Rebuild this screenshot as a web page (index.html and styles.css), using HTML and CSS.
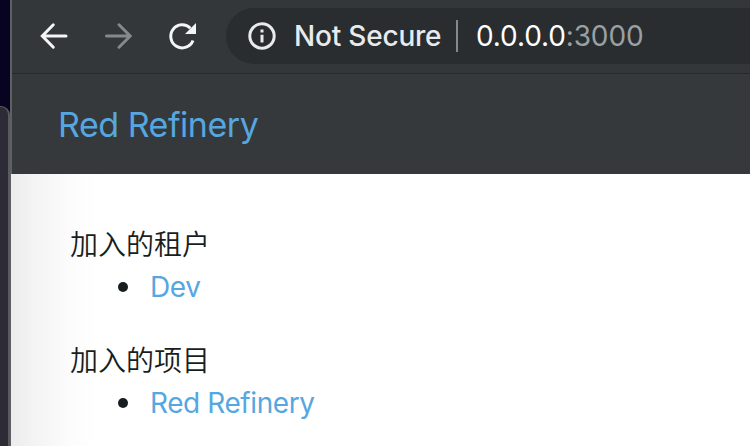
FILE: index.html
```html
<!DOCTYPE html>
<html lang="zh-CN">
<head>
<meta charset="utf-8">
<title>Red Refinery</title>
<link rel="stylesheet" href="styles.css">
</head>
<body>
<div class="desktop">
  <aside class="backdrop"><div class="back-window"></div></aside>
  <div class="browser">
    <div class="toolbar">
      <svg class="nav-icon" viewBox="0 0 28 28"><path d="M26 14H3M13.3 2.8 2.3 14 13.3 25.2"/></svg>
      <svg class="nav-icon disabled" viewBox="0 0 28 28"><path d="M2.5 14h23M15 2.8 26.2 14 15 25.2"/></svg>
      <svg class="nav-icon reload" viewBox="0 0 28 28"><path d="M22.4 6.2A11.5 11.5 0 1 0 25 18.5"/><path class="head" d="M28 1V12H17Z"/></svg>
      <div class="address">
        <svg class="info" viewBox="0 0 28 28"><circle cx="14" cy="14" r="12.2"/><path d="M14 12.8v7.7M14 7.5v3"/></svg>
        <span class="security">Not Secure</span>
        <span class="divider"></span>
        <span class="url">0.0.0.0<span class="port">:3000</span></span>
      </div>
    </div>
    <header class="site-header"><a class="brand">Red Refinery</a></header>
    <main class="content">
      <section class="group">
        <div class="title">加入的租户</div>
        <ul class="list"><li><a>Dev</a></li></ul>
      </section>
      <section class="group">
        <div class="title">加入的项目</div>
        <ul class="list"><li><a>Red Refinery</a></li></ul>
      </section>
    </main>
  </div>
</div>
</body>
</html>
```
FILE: styles.css
```css
* { box-sizing: border-box; }
body { margin: 0; font-family: Inter, "Noto Sans CJK SC", sans-serif; font-size: 28px; color: #181e20; }
.desktop { display: flex; width: 750px; height: 446px; overflow: hidden; background: #090322; }
.backdrop { width: 10px; padding-top: 106px; border-right: 1px solid #06041a; }
.back-window { width: 10px; height: 340px; background: #2d2c36; border: solid #595a60; border-width: 1px 2px 0 0; border-radius: 0 9px 0 0; }
.browser { width: 740px; border-left: 2px solid #5e6061; background: #fff; }
.toolbar { display: flex; align-items: center; height: 74px; padding-left: 28px; background: #333739; border-bottom: 1px solid #25292b; }
.nav-icon { width: 28px; height: 28px; margin: -2px 36px 0 0; flex: none; fill: none; stroke: #f4f6f6; stroke-width: 3; stroke-linecap: round; overflow: visible; }
.disabled { stroke: #85898b; }
.reload { margin: -1px 30px 0 0; stroke-linecap: butt; }
.reload .head { fill: #f4f6f6; stroke: none; }
.address { display: flex; align-items: center; width: 540px; height: 56px; flex: none; margin-top: -1px; padding-left: 22px; background: #292d2f; border-radius: 28px 0 0 28px; }
.info { width: 28px; height: 28px; fill: none; stroke: #e8eaed; stroke-width: 3; }
.security { width: 162px; margin-left: 18px; white-space: nowrap; font-weight: 450; color: #e8eaed; letter-spacing: -0.2px; }
.divider { width: 2px; height: 32px; background: #85898b; }
.url { margin-left: 18px; color: #fff; letter-spacing: -0.12px; }
.port { color: #9aa0a3; }
.site-header { display: flex; align-items: center; height: 100px; padding-left: 46px; background: #35393b; font-size: 34px; letter-spacing: -0.47px; }
a { color: #56a7df; }
.content { height: 272px; margin-left: -1px; padding: 50px 0 0 59px; background: linear-gradient(90deg, #ececec, #f5f5f5 28px, #fcfcfc 60px, #fff 88px); }
.group { height: 116px; line-height: 42px; }
.title { height: 42px; font-weight: 350; }
.list { margin: 0; padding: 0 0 0 48px; list-style: none; letter-spacing: -0.42px; }
.list li { display: flex; align-items: center; height: 42px; }
.list li::before { content: ""; width: 10px; height: 10px; margin-right: 22px; border-radius: 50%; background: #181e20; }
```
